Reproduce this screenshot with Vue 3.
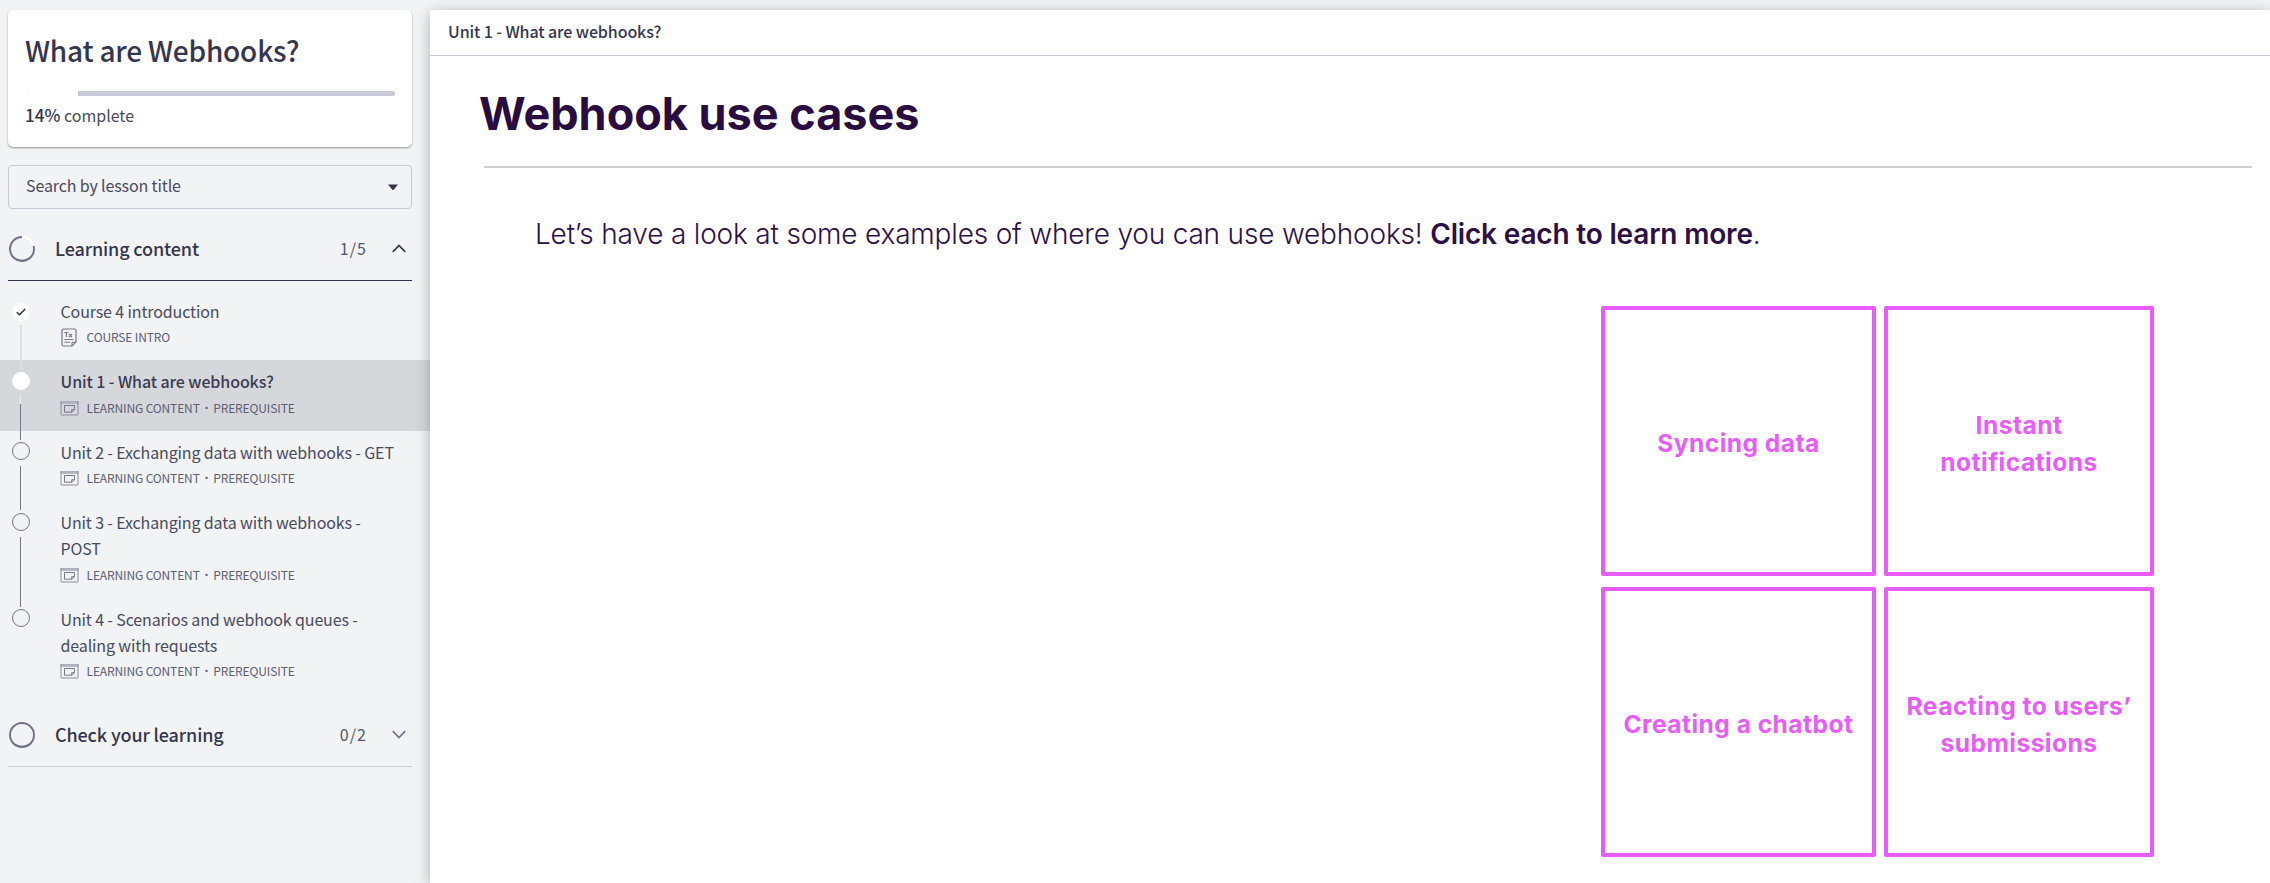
<script setup>
const lessons = [
  { lines: ['Course 4 introduction'], tags: ['COURSE INTRO'], icon: 'doc', state: 'done' },
  { lines: ['Unit 1 - What are webhooks?'], tags: ['LEARNING CONTENT', 'PREREQUISITE'], icon: 'screen', state: 'active' },
  { lines: ['Unit 2 - Exchanging data with webhooks - GET'], tags: ['LEARNING CONTENT', 'PREREQUISITE'], icon: 'screen', state: 'todo' },
  { lines: ['Unit 3 - Exchanging data with webhooks -', 'POST'], tags: ['LEARNING CONTENT', 'PREREQUISITE'], icon: 'screen', state: 'todo' },
  { lines: ['Unit 4 - Scenarios and webhook queues -', 'dealing with requests'], tags: ['LEARNING CONTENT', 'PREREQUISITE'], icon: 'screen', state: 'todo' },
]
const cards = [['Syncing data'], ['Instant', 'notifications'], ['Creating a chatbot'], ['Reacting to users’', 'submissions']]
const progress = 14
</script>

<template>
  <div class="page">
    <aside class="sidebar">
      <section class="course">
        <h1>What are Webhooks?</h1>
        <div class="bar"><div class="bar-done" :style="{ width: progress + '%' }"></div></div>
        <p class="complete"><b>{{ progress }}%</b> complete</p>
      </section>

      <div class="search">
        <span>Search by lesson title</span>
        <svg width="10" height="7" viewBox="0 0 10 7"><path d="M0 .4h10L5.9 5.6q-.9 1-1.8 0z" fill="#35354f" /></svg>
      </div>

      <div class="group open">
        <svg class="ring" width="28" height="28" viewBox="0 0 28 28" fill="none">
          <path d="M14 2A12 12 0 0 1 25.6 11" stroke="#fff" stroke-width="1.8" />
          <path d="M25.6 11A12 12 0 1 1 14 2" stroke="#6f7186" stroke-width="1.9" />
          <path d="M4.5 21.5Q14 29.5 23.5 21.5" stroke="#6f7186" stroke-width="1.5" />
        </svg>
        <span class="name">Learning content</span>
        <span class="count">1/5</span>
        <svg width="14" height="9" viewBox="0 0 14 9" fill="none"><path d="M.8 7.8 7 1.5l6.2 6.3" stroke="#35354f" stroke-width="1.7" /></svg>
      </div>

      <ul class="lessons">
        <li v-for="l in lessons" :key="l.lines[0]" :class="l.state">
          <div class="rail">
            <span class="dot">
              <svg v-if="l.state === 'done'" width="10" height="8" viewBox="0 0 10 8" fill="none"><path d="M.8 4.2 3.5 6.7 9.2 1" stroke="#2b2b3d" stroke-width="1.5" /></svg>
            </span>
            <span class="line"></span>
          </div>
          <div class="info">
            <div v-for="t in l.lines" :key="t" class="title">{{ t }}</div>
            <div class="meta">
              <svg v-if="l.icon === 'doc'" class="doc" width="16" height="19" viewBox="0 0 16 19" fill="none" stroke="#74768a">
                <path d="M2.5 1h11q1.5 0 1.5 1.5V14l-4 4H2.5Q1 18 1 16.5v-14Q1 1 2.5 1z" stroke-width="1.2" />
                <path d="M11 18v-3.8h4M3.5 11.5h9M3.5 14.2h5.5" />
                <path d="M3.3 4.500H7.500M5.400 4.500V9M8 6l3 3.200M11 6 8 9.200" stroke-width="1.2" />
              </svg>
              <svg v-else class="screen" width="19" height="16" viewBox="0 0 19 16" fill="none" stroke="#8a8c9e">
                <path d="M1 1.500h17v1.800H1z" fill="#b9bac6" stroke="#a3a4b4" stroke-width=".8" />
                <path d="M1 1v13.500q0 .5.500.5h16q.5 0 .5-.5V1" />
                <path d="M4.500 5.500h10v4.200l-2.500 2.500H4.500zM11.700 12.200V9.700h2.800" stroke="#76788c" />
              </svg>
              <template v-for="(t, i) in l.tags" :key="t"><span v-if="i" class="sep">·</span><span>{{ t }}</span></template>
            </div>
          </div>
        </li>
      </ul>

      <div class="group closed">
        <svg class="ring" width="28" height="28" viewBox="0 0 28 28" fill="none" stroke="#6f7186">
          <circle cx="14" cy="14" r="12" stroke-width="1.9" />
          <path d="M4.5 21.5Q14 29.5 23.5 21.5" stroke-width="1.5" />
        </svg>
        <span class="name">Check your learning</span>
        <span class="count">0/2</span>
        <svg width="14" height="9" viewBox="0 0 14 9" fill="none"><path d="M.8 1.2 7 7.5l6.2-6.3" stroke="#6f7186" stroke-width="1.7" /></svg>
      </div>
    </aside>

    <main class="content">
      <header>Unit 1 - What are webhooks?</header>
      <h2>Webhook use cases</h2>
      <hr />
      <p class="intro">Let’s have a look at some examples of where you can use webhooks! <b>Click each to learn more</b>.</p>
      <div class="grid">
        <div v-for="c in cards" :key="c[0]" class="card">
          <div v-for="t in c" :key="t">{{ t }}</div>
        </div>
      </div>
    </main>
  </div>
</template>

<style>
body { margin: 0; background: #f1f3f5; }
</style>

<style scoped>
* { box-sizing: border-box; }
.page {
  display: flex;
  width: 2270px;
  height: 883px;
  overflow: hidden;
  background: #f1f3f5;
  color: #35354f;
  font: 400 16px/26px 'Noto Sans CJK SC', 'Noto Sans', sans-serif;
  letter-spacing: -0.13px;
  white-space: nowrap;
}
.sidebar { width: 430px; flex: none; padding-top: 10px; }
.course {
  margin: 0 18px 18px 8px;
  height: 137px;
  padding: 20px 17px 0 18px;
  background: #fff;
  border-radius: 5px;
  box-shadow: 0 1px 2px rgba(0, 0, 0, .4);
}
h1 { margin: 0 0 21px -1px; font-size: 28px; line-height: 40px; font-weight: 500; letter-spacing: -0.2px; }
.bar { height: 5px; border-radius: 3px; background: #c7cad6; overflow: hidden; }
.bar-done { height: 5px; background: #fff; }
.complete { margin: 7px 0 0 -1px; line-height: 24px; letter-spacing: 0; color: #494a60; }
.complete b { font-weight: 500; font-size: 17px; color: #35354f; }
.search {
  display: flex;
  align-items: center;
  justify-content: space-between;
  height: 44px;
  margin: 0 18px 8px 8px;
  padding: 0 13px 0 17px;
  border: 1px solid #c7cad6;
  border-radius: 4px;
  color: #494a60;
}
.search span { padding-bottom: 4px; }
.group {
  display: flex;
  align-items: center;
  height: 64px;
  margin: 0 18px 0 8px;
  padding-right: 6px;
  border-bottom: 1px solid #c7cad6;
}
.group.open { border-color: #35354f; }
.group.closed { padding-top: 1px; }
.ring { margin-right: 19px; }
.name { flex: 1; padding-bottom: 1.5px; font-size: 18px; font-weight: 500; }
.count { margin-right: 25px; padding-bottom: 1px; letter-spacing: 1.1px; color: #54566d; }
.lessons { list-style: none; margin: 8.5px 0; padding: 0; }
li { display: flex; }
li.active { background: #d6d7db; }
.rail { display: flex; flex-direction: column; align-items: center; width: 41px; margin-right: 19.5px; padding-top: 11.5px; }
.dot {
  display: flex;
  align-items: center;
  justify-content: center;
  width: 18px;
  height: 18px;
  flex: none;
  border: 1px solid #74768a;
  border-radius: 50%;
}
.done .dot, .active .dot { background: #fff; border-color: #fff; }
.done .rail { padding-top: 13.5px; }
.line { flex: 1; width: 1px; margin: 6px 0 -9px; background: #74768a; z-index: 1; }
.done .line { width: 2px; margin-top: 4px; background: #dedfe2; }
.active .line { background: linear-gradient(#eeeff1 8px, #74768a 8px); }
li:last-child .line { visibility: hidden; }
.info { padding: 8px 0 14px; }
.title { color: #494a60; }
.active .title { font-weight: 500; color: #3b3b53; letter-spacing: -0.1px; }
.meta { display: flex; align-items: center; height: 18px; margin-top: 4.5px; font-size: 12px; line-height: 18px; color: #5c5e74; }
.doc { margin-right: 10px; }
.screen { margin: 0 8px 0 -1px; }
.sep { width: 13.5px; text-align: center; font-weight: 300; }
.content {
  position: relative;
  flex: 1;
  margin-top: 10px;
  background: #fff;
  box-shadow: 0 3px 14px rgba(0, 0, 0, .28);
}
header { height: 46px; padding: 8px 18px 0; line-height: 26px; font-weight: 500; letter-spacing: -0.1px; border-bottom: 1px solid #c7cad6; }
h2 { margin: 29.5px 0 0 49px; font: 700 45px/56px Inter, sans-serif; letter-spacing: 0; color: #290d40; }
hr { height: 2px; margin: 24.5px 18px 0 53.5px; border: 0; background: #d3cecf; }
.intro { margin: 46px 0 0 105px; font: 300 28px/40px Inter, sans-serif; letter-spacing: -0.18px; color: #2d1049; }
.intro b { font-weight: 600; }
.grid {
  display: grid;
  grid-template: 270px 270px / 275px 270px;
  gap: 11px 8px;
  margin: 52px 0 0 1171px;
}
.card {
  display: flex;
  flex-direction: column;
  align-items: center;
  justify-content: center;
  padding-top: 6px;
  border: 4px solid #e85cfb;
  border-radius: 2px;
  color: #e85cfb;
  font: 700 24.5px/37.5px Inter, sans-serif;
  letter-spacing: 0.5px;
}
</style>
